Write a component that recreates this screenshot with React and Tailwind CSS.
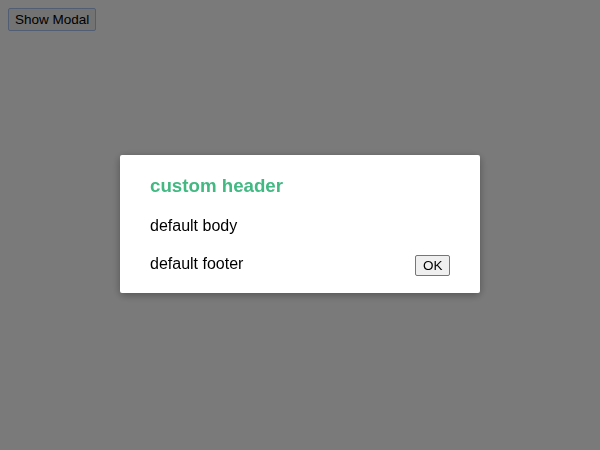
import React from 'react';

const App = () => {
  return (
    <div className="relative min-h-screen bg-white font-['Liberation_Sans',Arial,sans-serif] text-black">
      <div className="p-2 pt-[7px]">
        <button className="h-[23px] px-[6px] text-[13.5px] leading-none bg-[#f0f0f0] border border-[#a9c3f0] rounded-[2px] text-black">
          Show Modal
        </button>
      </div>

      <div className="fixed inset-0 bg-[rgba(0,0,0,0.52)] flex items-center justify-center">
        <div className="w-[360px] mb-[2px] bg-white rounded-[2px] px-[30px] pt-[20px] pb-[20px] shadow-[0_2px_8px_rgba(0,0,0,0.33)]">
          <h3 className="text-[18.72px] leading-[21px] font-bold text-[#42b983]">custom header</h3>
          <div className="mt-[21px] text-base leading-[18px]">default body</div>
          <div className="mt-[20px] h-[18px] flex justify-between items-start text-base leading-[18px]">
            <span>default footer</span>
            <button className="h-[21px] px-[6.5px] text-[13.5px] leading-none bg-[#efefef] border border-[#767676] rounded-[2px] text-black">
              OK
            </button>
          </div>
        </div>
      </div>
    </div>
  );
};

export default App;
